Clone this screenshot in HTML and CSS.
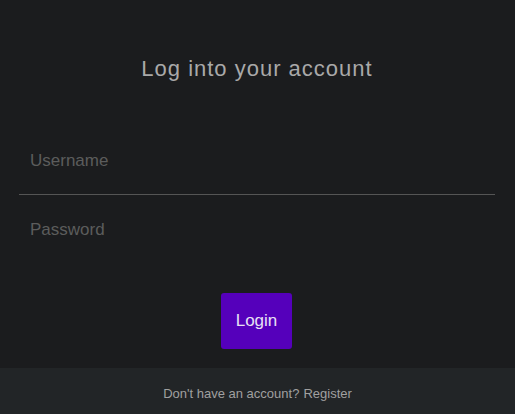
FILE: index.html
```html
<!DOCTYPE html>
<html>
<head>
<meta charset="utf-8">
<link rel="stylesheet" href="styles.css">
</head>
<body>
<div class="page">
  <main class="card">
    <h1 class="title">Log into your account</h1>
    <form class="form">
      <input class="field field-user" type="text" placeholder="Username">
      <input class="field field-pass" type="password" placeholder="Password">
      <div class="actions">
        <button class="btn" type="button">Login</button>
      </div>
    </form>
  </main>
  <footer class="footer">Don't have an account? <a class="link" href="#">Register</a></footer>
</div>
</body>
</html>
```
FILE: styles.css
```css
html, body {
  margin: 0;
  padding: 0;
  height: 100%;
  background: #1b1c1e;
  font-family: "Liberation Sans", Arial, sans-serif;
}
.page {
  display: flex;
  flex-direction: column;
  height: 414px;
}
.card {
  flex: 1;
  padding: 0 20px 0 19px;
  display: flex;
  flex-direction: column;
}
.title {
  margin: 56px 0 0 0;
  font-weight: normal;
  font-size: 22px;
  line-height: 26px;
  letter-spacing: 1px;
  text-align: center;
  color: #a9a9a9;
}
.form {
  display: flex;
  flex-direction: column;
  margin-top: 44px;
}
.field {
  display: block;
  box-sizing: border-box;
  width: 100%;
  height: 69px;
  padding: 2px 11px 0 11px;
  background: transparent;
  border: none;
  outline: none;
  font-family: "Liberation Sans", Arial, sans-serif;
  font-size: 17px;
  color: #ccc;
}
.field::placeholder {
  color: #5c5c5c;
}
.field-user {
  border-bottom: 1px solid #555;
}
.field-pass {
  padding-top: 0;
}
.actions {
  display: flex;
  justify-content: center;
  margin-top: 29px;
  padding-right: 1px;
}
.btn {
  width: 71px;
  height: 56px;
  border: none;
  border-radius: 3px;
  background: #5500bb;
  color: #e8e0f4;
  font-family: "Liberation Sans", Arial, sans-serif;
  font-size: 17px;
}
.footer {
  height: 46px;
  box-sizing: border-box;
  padding-top: 18px;
  line-height: 15px;
  background: #222527;
  color: #a0a0a0;
  font-size: 13px;
  display: flex;
  align-items: flex-start;
  justify-content: center;
}
.link {
  color: #a0a0a0;
  text-decoration: none;
  margin-left: 4px;
}
```
